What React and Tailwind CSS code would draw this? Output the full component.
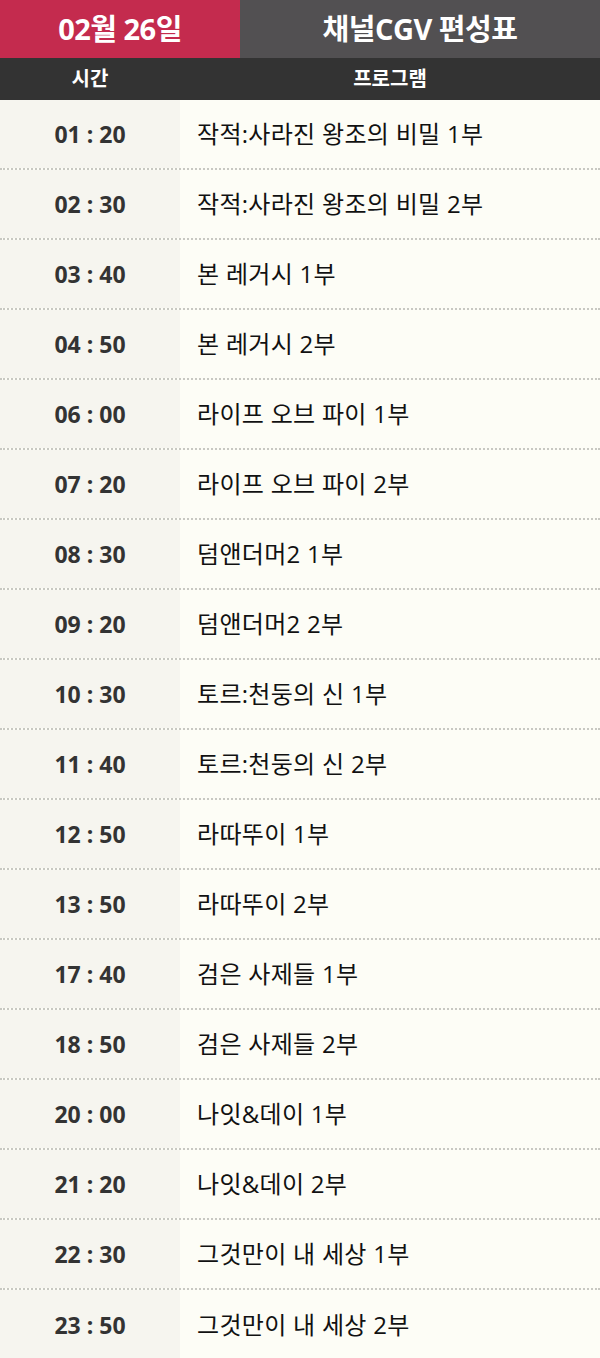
const rows = [
  ["01 : 20", "작적:사라진 왕조의 비밀 1부"],
  ["02 : 30", "작적:사라진 왕조의 비밀 2부"],
  ["03 : 40", "본 레거시 1부"],
  ["04 : 50", "본 레거시 2부"],
  ["06 : 00", "라이프 오브 파이 1부"],
  ["07 : 20", "라이프 오브 파이 2부"],
  ["08 : 30", "덤앤더머2 1부"],
  ["09 : 20", "덤앤더머2 2부"],
  ["10 : 30", "토르:천둥의 신 1부"],
  ["11 : 40", "토르:천둥의 신 2부"],
  ["12 : 50", "라따뚜이 1부"],
  ["13 : 50", "라따뚜이 2부"],
  ["17 : 40", "검은 사제들 1부"],
  ["18 : 50", "검은 사제들 2부"],
  ["20 : 00", "나잇&데이 1부"],
  ["21 : 20", "나잇&데이 2부"],
  ["22 : 30", "그것만이 내 세상 1부"],
  ["23 : 50", "그것만이 내 세상 2부"],
];

export default function App() {
  return (
    <div className="w-[600px] bg-[#fdfdf6]" style={{ fontFamily: '"Open Sans", "Noto Sans CJK KR", sans-serif' }}>
      <div className="flex h-[58px]">
        <div className="w-[240px] bg-[#c42b4e] flex items-center justify-center text-white font-bold text-[29px] tracking-[-0.5px]">02월 26일</div>
        <div className="flex-1 bg-[#525052] flex items-center justify-center text-white font-bold text-[29px] tracking-[-0.5px]">채널CGV 편성표</div>
      </div>
      <div className="flex h-[42px] bg-[#333333] text-white font-bold text-[20px]">
        <div className="w-[180px] flex items-center justify-center">시간</div>
        <div className="flex-1 flex items-center justify-center">프로그램</div>
      </div>
      {rows.map(([t, p], i) => (
        <div key={i} className={`flex h-[70px] ${i < rows.length - 1 ? "border-b-2 border-dotted border-[#c8c8c2]" : ""}`}>
          <div className="w-[180px] bg-[#f6f5ef] flex items-center justify-center text-[#333] font-bold text-[23px]">{t}</div>
          <div className="flex-1 flex items-center pl-[17px] text-[#111] text-[24px] tracking-[0.3px]">{p}</div>
        </div>
      ))}
    </div>
  );
}
